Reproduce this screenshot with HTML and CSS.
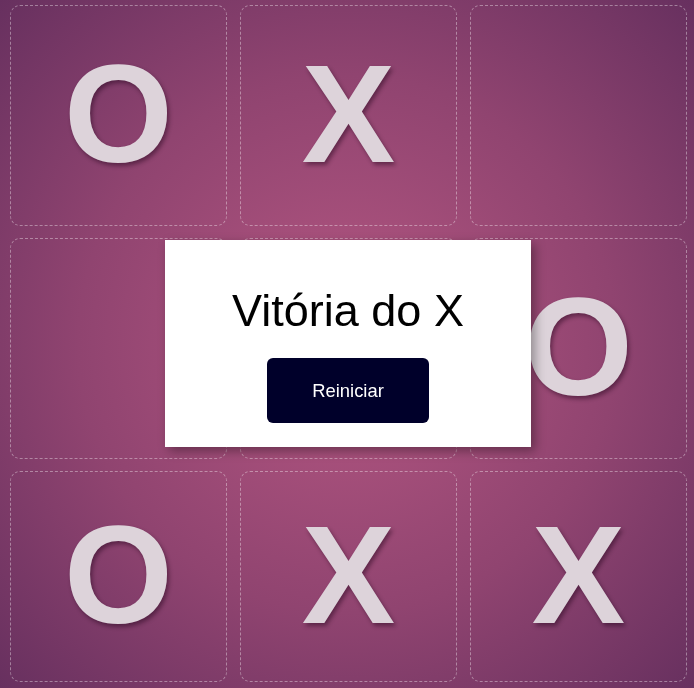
FILE: index.html
```html
<!DOCTYPE html>
<html lang="pt">
<head>
<meta charset="utf-8">
<title>Jogo da Velha</title>
<link rel="stylesheet" href="styles.css">
</head>
<body>
<main class="board">
  <div class="cell">O</div>
  <div class="cell">X</div>
  <div class="cell"></div>
  <div class="cell"></div>
  <div class="cell"></div>
  <div class="cell">O</div>
  <div class="cell">O</div>
  <div class="cell">X</div>
  <div class="cell">X</div>
</main>
<div class="modal">
  <h1 class="modal-title">Vitória do X</h1>
  <button class="restart">Reiniciar</button>
</div>
</body>
</html>
```
FILE: styles.css
```css
* { box-sizing: border-box; }
html, body { margin: 0; height: 100%; }
body {
  font-family: "Liberation Sans", Arial, sans-serif;
  background: radial-gradient(circle at 50% 50%, #b55782 0%, #904470 55%, #67305f 100%);
  overflow: hidden;
}
.board {
  height: 688px;
  display: grid;
  grid-template-columns: repeat(3, 217px);
  grid-template-rows: 221px 221px 1fr;
  column-gap: 13px;
  row-gap: 12px;
  padding: 5px 7px 6px 10px;
}
.cell {
  border: 1px dashed rgba(255, 255, 255, 0.38);
  border-radius: 10px;
  display: flex;
  align-items: center;
  justify-content: center;
  padding-bottom: 4px;
  font-weight: bold;
  font-size: 140px;
  color: #ddd3da;
  text-shadow: 2px 3px 4px rgba(30, 0, 25, 0.45);
}
.modal {
  position: fixed;
  left: 50%;
  top: 50%;
  width: 366px;
  height: 207px;
  margin-left: -182px;
  margin-top: -104px;
  background: #fff;
  box-shadow: 4px 4px 10px rgba(0, 0, 0, 0.35);
  display: flex;
  flex-direction: column;
  align-items: center;
  padding: 45px 0 24px;
  gap: 21px;
}
.modal-title {
  margin: 0;
  font-size: 45px;
  font-weight: normal;
  color: #000;
  line-height: normal;
}
.restart {
  width: 162px;
  height: 67px;
  border: none;
  border-radius: 6px;
  background: #00002a;
  color: #fff;
  font-family: "Liberation Sans", Arial, sans-serif;
  font-size: 18.4px;
}
```
